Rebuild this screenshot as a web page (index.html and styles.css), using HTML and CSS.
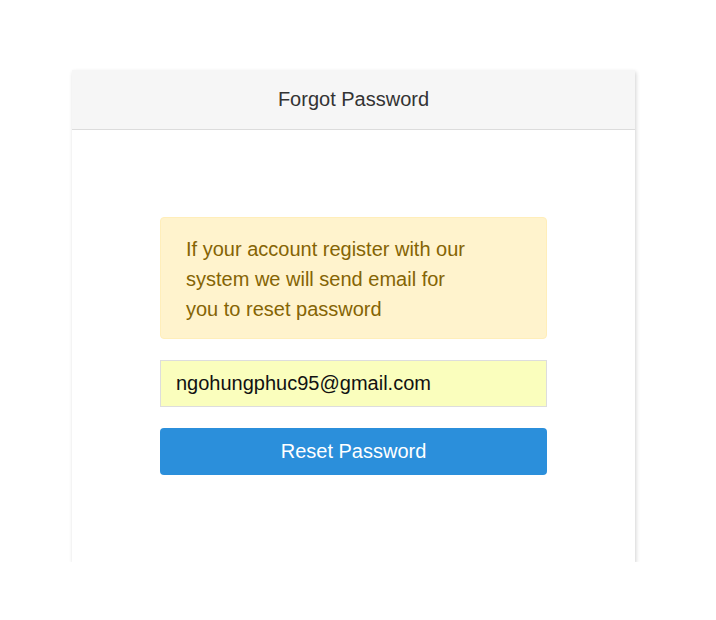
FILE: index.html
```html
<!DOCTYPE html>
<html>
<head>
<meta charset="utf-8">
<link rel="stylesheet" href="styles.css">
</head>
<body>
<div class="page">
  <div class="card">
    <div class="card-header">Forgot Password</div>
    <div class="card-body">
      <div class="alert">If your account register with our system we will send email for you to reset password</div>
      <input class="email" type="text" value="ngohungphuc95@gmail.com">
      <button class="btn" type="button">Reset Password</button>
    </div>
  </div>
</div>
</body>
</html>
```
FILE: styles.css
```css
html, body {
  margin: 0;
  padding: 0;
  background: #fff;
  font-family: "Liberation Sans", Arial, sans-serif;
}
.page {
  padding: 70px 0 0 72px;
}
.card {
  width: 563px;
  background: #fff;
  box-shadow: 1px 2px 4px rgba(0, 0, 0, 0.18);
}
.card-header {
  height: 59px;
  line-height: 59px;
  background: #f6f6f6;
  border-bottom: 1px solid #dcdcdc;
  text-align: center;
  font-size: 20px;
  color: #333;
}
.card-body {
  padding: 87px 88px 87px 88px;
  display: flex;
  flex-direction: column;
  gap: 21px;
}
.alert {
  background: #fff3cd;
  border: 1px solid #ffeeba;
  border-radius: 4px;
  color: #856404;
  font-size: 20px;
  line-height: 30px;
  padding: 16px 70px 14px 25px;
}
.email {
  box-sizing: border-box;
  height: 47px;
  width: 100%;
  margin: 0;
  border: 1px solid #ddd;
  background: #fafebd;
  font-family: "Liberation Sans", Arial, sans-serif;
  font-size: 20px;
  color: #111;
  padding: 0 15px;
  outline: none;
}
.btn {
  height: 47px;
  width: 100%;
  margin: 0;
  border: none;
  border-radius: 4px;
  background: #2b8fdb;
  color: #fff;
  font-family: "Liberation Sans", Arial, sans-serif;
  font-size: 20px;
}
```
